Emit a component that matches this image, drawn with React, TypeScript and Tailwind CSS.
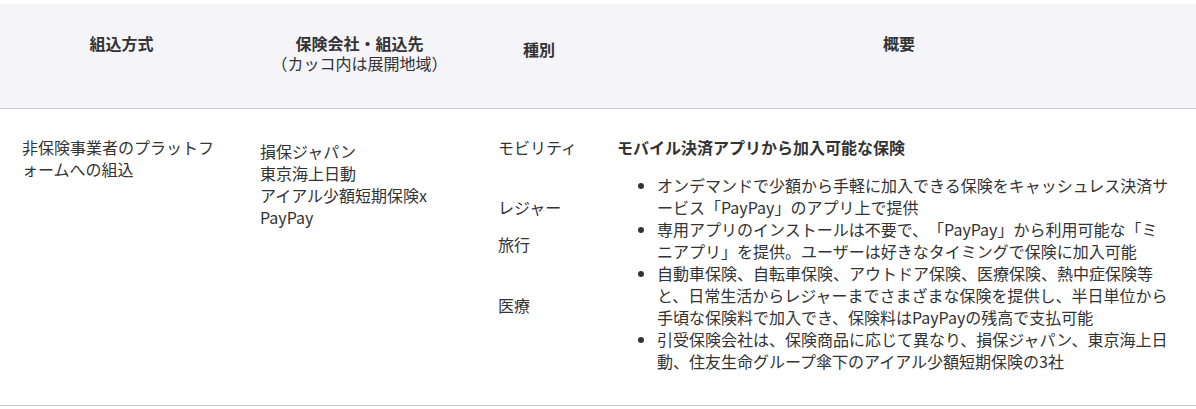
const bullets = [
  "オンデマンドで少額から手軽に加入できる保険をキャッシュレス決済サービス「PayPay」のアプリ上で提供",
  "専用アプリのインストールは不要で、「PayPay」から利用可能な「ミニアプリ」を提供。ユーザーは好きなタイミングで保険に加入可能",
  "自動車保険、自転車保険、アウトドア保険、医療保険、熱中症保険等と、日常生活からレジャーまでさまざまな保険を提供し、半日単位から手頃な保険料で加入でき、保険料はPayPayの残高で支払可能",
  "引受保険会社は、保険商品に応じて異なり、損保ジャパン、東京海上日動、住友生命グループ傘下のアイアル少額短期保険の3社",
];

export default function App() {
  return (
    <div
      className="h-[409px] w-[1196px] overflow-hidden bg-white pt-1 text-[16px] leading-[22px] text-[#333] [line-break:loose] [text-spacing-trim:space-all]"
      style={{ fontFamily: '"Noto Sans CJK JP", "Noto Sans", sans-serif' }}
    >
      <div className="grid grid-cols-[243px_233px_126px_1fr] border-b border-[#c8c8cc] bg-[#f5f5f9] h-[105px] text-center font-bold leading-[20px]">
        <div className="pt-[29px]">組込方式</div>
        <div className="pt-[29px]">
          <div>保険会社・組込先</div>
          <div className="font-normal">（カッコ内は展開地域）</div>
        </div>
        <div className="pt-[35px]">種別</div>
        <div className="pt-[29px]">概要</div>
      </div>

      <div className="grid grid-cols-[243px_233px_126px_1fr] border-b border-[#c8c8cc] h-[297px]">
        <div className="pl-[22px] pr-[20px] pt-[27px]">非保険事業者のプラットフォームへの組込</div>
        <div className="pl-[17px] pt-[31px]">
          <div>損保ジャパン</div>
          <div>東京海上日動</div>
          <div>アイアル少額短期保険x PayPay</div>
        </div>
        <div className="pl-[22px] pt-[27px]">
          <div>モビリティ</div>
          <div className="mt-[38px]">レジャー</div>
          <div className="mt-[15px]">旅行</div>
          <div className="mt-[39px]">医療</div>
        </div>
        <div className="pl-[15px] pr-[26px] pt-[27px]">
          <div className="font-bold">モバイル決済アプリから加入可能な保険</div>
          <ul className="mt-[16px] list-disc pl-[40px]">
            {bullets.map((b) => (
              <li key={b}>{b}</li>
            ))}
          </ul>
        </div>
      </div>
    </div>
  );
}
